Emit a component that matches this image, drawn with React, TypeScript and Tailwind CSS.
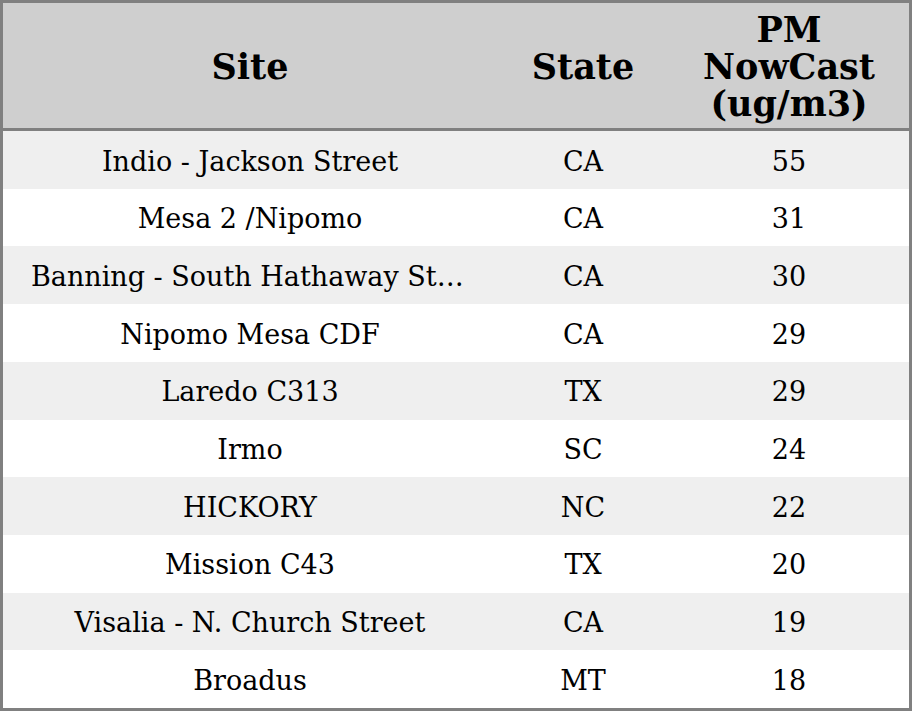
import React from "react";

const rows: [string, string, string][] = [
  ["Indio - Jackson Street", "CA", "55"],
  ["Mesa 2 /Nipomo", "CA", "31"],
  ["Banning - South Hathaway Street", "CA", "30"],
  ["Nipomo Mesa CDF", "CA", "29"],
  ["Laredo C313", "TX", "29"],
  ["Irmo", "SC", "24"],
  ["HICKORY", "NC", "22"],
  ["Mission C43", "TX", "20"],
  ["Visalia - N. Church Street", "CA", "19"],
  ["Broadus", "MT", "18"],
];

export default function App() {
  return (
    <div
      className="w-[912px] h-[711px] border-[3px] border-[#808080] bg-white text-black flex flex-col"
      style={{ fontFamily: '"DejaVu Serif", serif' }}
    >
      <div className="h-[128px] shrink-0 pt-[2px] bg-[#cfcfcf] grid grid-cols-[494px_172px_240px] items-center text-center font-bold text-[35px] leading-[37px] border-b-[3px] border-[#808080]">
        <div>Site</div>
        <div>State</div>
        <div>
          PM
          <br />
          NowCast
          <br />
          (ug/m3)
        </div>
      </div>
      <div className="flex-1 grid grid-rows-[repeat(10,1fr)]">
        {rows.map((r, i) => (
          <div
            key={i}
            className={`grid grid-cols-[494px_172px_240px] items-center text-center text-[27px] pt-1 ${
              i % 2 === 0 ? "bg-[#efefef]" : "bg-white"
            }`}
          >
            <div className="px-[28px] truncate">{r[0]}</div>
            <div>{r[1]}</div>
            <div>{r[2]}</div>
          </div>
        ))}
      </div>
    </div>
  );
}
